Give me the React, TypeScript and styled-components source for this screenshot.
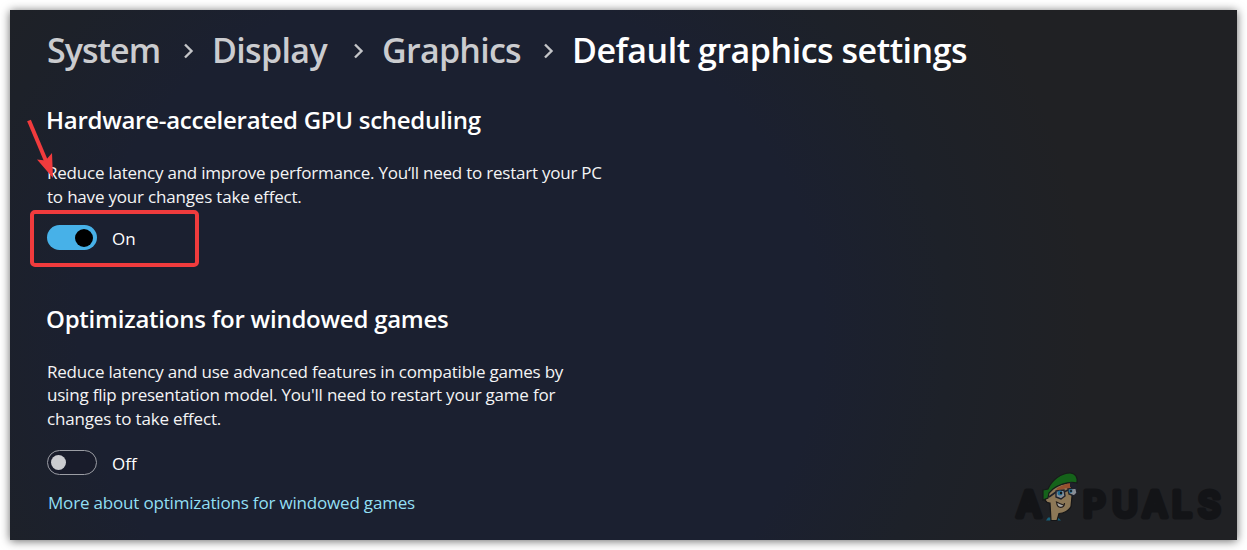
import styled, { createGlobalStyle } from 'styled-components';

const GlobalStyle = createGlobalStyle`
	* {
		box-sizing: border-box;
	}

	body {
		margin: 0;
		background: #ffffff;
		font-family: 'Open Sans', 'Noto Sans', sans-serif;
		overflow: hidden;
	}
`;

const Page = styled.div`
	height: 550px;
	padding: 10px;
`;

const Window = styled.main`
	position: relative;
	height: 530px;
	padding: 15px 36px 0;
	color: #ffffff;
	background: radial-gradient(
		ellipse 640px 600px at 440px 320px,
		#1b2030 0%,
		#1b2030 58%,
		#1d2129 78%,
		#202124 100%
	);
	box-shadow: 0 1px 9px rgba(0, 0, 0, 0.6);
`;

const Breadcrumbs = styled.nav`
	display: flex;
	align-items: center;
	height: 50px;
	padding-left: 1px;
	white-space: nowrap;
`;

const Crumb = styled.span<{ $width: number; $spacing: number; $current?: boolean }>`
	flex: 0 0 ${({ $width }) => $width}px;
	font-size: 34px;
	line-height: 50px;
	font-weight: 600;
	letter-spacing: ${({ $spacing }) => $spacing}px;
	color: ${({ $current }) => ($current ? '#ffffff' : '#cbcccf')};
`;

const Separator = styled.svg`
	flex: none;
	width: 11px;
	height: 16px;
	margin: 2px 17px 0 0;
	fill: none;
	stroke: #c4c5c8;
	stroke-width: 2.4;
`;

const Section = styled.section<{ $top: number }>`
	display: flex;
	flex-direction: column;
	align-items: flex-start;
	margin-top: ${({ $top }) => $top}px;
`;

const Title = styled.h2<{ $spacing: number }>`
	margin: 0 0 24px;
	font-size: 24px;
	line-height: 34px;
	font-weight: 600;
	letter-spacing: ${({ $spacing }) => $spacing}px;
	white-space: nowrap;
`;

const Description = styled.p<{ $lineHeight?: number }>`
	margin: 0 0 0 1px;
	font-size: 17px;
	line-height: ${({ $lineHeight = 24 }) => $lineHeight}px;
	color: #f4f4f5;
	white-space: nowrap;
`;

const Line = styled.span<{ $spacing: number }>`
	display: block;
	letter-spacing: ${({ $spacing }) => $spacing}px;
`;

const ToggleRow = styled.div<{ $top: number }>`
	position: relative;
	display: flex;
	align-items: center;
	gap: 15px;
	height: 25px;
	margin: ${({ $top }) => $top}px 0 0 1px;
	font-size: 17px;
	line-height: 24px;
`;

const Switch = styled.button<{ $on?: boolean }>`
	display: flex;
	align-items: center;
	justify-content: ${({ $on }) => ($on ? 'flex-end' : 'flex-start')};
	width: 50px;
	height: 25px;
	padding: ${({ $on }) => ($on ? '0 4px' : '0 3px')};
	border: ${({ $on }) => ($on ? '0' : '1px solid #9b9da4')};
	border-radius: 13px;
	background: ${({ $on }) => ($on ? '#47b1e8' : '#191c2b')};
`;

const Knob = styled.span<{ $on?: boolean }>`
	width: ${({ $on }) => ($on ? 18 : 15)}px;
	height: ${({ $on }) => ($on ? 18 : 15)}px;
	border-radius: 50%;
	background: ${({ $on }) => ($on ? '#000000' : '#cbccd0')};
`;

const State = styled.span`
	padding-top: 3px;
`;

const MoreLink = styled.a`
	margin: 16px 0 0 2px;
	font-size: 17px;
	line-height: 24px;
	letter-spacing: -0.18px;
	color: #92dff3;
	white-space: nowrap;
`;

/* red marks drawn over the page */
const Highlight = styled.div`
	position: absolute;
	left: -17px;
	top: -15px;
	width: 169px;
	height: 57px;
	border: 4px solid #f03b3d;
	border-radius: 5px;
`;

const Arrow = styled.svg`
	position: absolute;
	left: 14px;
	top: 108px;
	width: 34px;
	height: 64px;
`;

const Watermark = styled.svg`
	position: absolute;
	left: 1000px;
	top: 458px;
	width: 220px;
	height: 62px;
`;

const Chevron = () => (
	<Separator viewBox='0 0 11 16'>
		<path d='M1 1.500 7.500 8 1 14.500' />
	</Separator>
);

const Toggle = ({ on, top }: { on?: boolean; top: number }) => (
	<ToggleRow $top={top}>
		<Switch $on={on} role='switch' aria-checked={!!on}>
			<Knob $on={on} />
		</Switch>
		<State>{on ? 'On' : 'Off'}</State>
		{on && <Highlight />}
	</ToggleRow>
);

const Logo = () => (
	<Watermark viewBox='1010 468 220 62'>
		<text
			x='1016.5 1083 1112 1142.5 1172 1198'
			y='517.3'
			fontFamily='Inter, sans-serif'
			fontSize='35'
			fontWeight='500'
			fill='#131417'
			stroke='#131417'
			strokeWidth='5'
			strokeLinejoin='round'>
			APUALS
		</text>
		<path d='M1046 520.500l2-3h10l3 3z' fill='#176079' />
		<path
			d='M1045 500c1 2 3 3 5 3l1 17.500h6l2-7c5 0 10-3 12-7l1-10-1-14-15 3-9 9z'
			fill='#8d7857'
			stroke='#151517'
			strokeWidth='1.2'
		/>
		<path d='M1057 488l13-6 1 9-5-3-10 4z' fill='#96512f' />
		<path
			d='M1043 490l5-1c4-9 13-16 22-16 5 0 8 4 7 10-9-2-18 2-24 6l-4 4-1 5-5 2z'
			fill='#15631a'
			stroke='#171b1a'
			strokeWidth='1.2'
		/>
		<path d='M1070 482l7 2-1 5-6-2z' fill='#20212b' />
		<path
			d='M1056 491l8-1 1 6-4 3-5-2zM1068 489l8-1 1 5-3 3-5-2z'
			fill='#898e96'
			stroke='#20222b'
			strokeWidth='1.4'
		/>
		<path d='M1064 492l4-2M1056 492l-7 5' stroke='#20222b' strokeWidth='1.6' />
		<circle cx='1060' cy='493' r='2.500' fill='#236d91' />
		<circle cx='1070.500' cy='491' r='2' fill='#236d91' />
		<circle cx='1061' cy='493' r='1.200' fill='#121419' />
		<circle cx='1071' cy='491' r='1' fill='#121419' />
		<path d='M1056.500 502c2 1 4 2 7 3 1 0 1-1 1-2 0 5-7 7-8-1z' fill='#aaa9a6' stroke='#241e1b' strokeWidth='1.2' />
	</Watermark>
);

const App = () => {
	return (
		<>
			<GlobalStyle />
			<Page>
				<Window>
					<Breadcrumbs>
						<Crumb $width={137} $spacing={-0.95}>System</Crumb>
						<Chevron />
						<Crumb $width={142} $spacing={-0.65}>Display</Crumb>
						<Chevron />
						<Crumb $width={162} $spacing={-0.73}>Graphics</Crumb>
						<Chevron />
						<Crumb $width={420} $spacing={-0.48} $current>Default graphics settings</Crumb>
					</Breadcrumbs>

					<Section $top={28}>
						<Title $spacing={-0.28}>Hardware-accelerated GPU scheduling</Title>
						<Description>
							<Line $spacing={-0.225}>Reduce latency and improve performance. You‘ll need to restart your PC</Line>
							<Line $spacing={-0.19}>to have your changes take effect.</Line>
						</Description>
						<Toggle on top={16} />
					</Section>

					<Section $top={52}>
						<Title $spacing={-0.24}>Optimizations for windowed games</Title>
						<Description $lineHeight={23.4}>
							<Line $spacing={-0.21}>Reduce latency and use advanced features in compatible games by</Line>
							<Line $spacing={-0.21}>using flip presentation model. You'll need to restart your game for</Line>
							<Line $spacing={-0.17}>changes to take effect.</Line>
						</Description>
						<Toggle top={19.8} />
						<MoreLink>More about optimizations for windowed games</MoreLink>
					</Section>

					<Arrow viewBox='24 118 34 64'>
						<path d='M29 120.500 46 161' fill='none' stroke='#f03b3d' strokeWidth='4' />
						<path d='M53 178 37 159.500l8.500 1L52 153z' fill='#f03b3d' />
					</Arrow>
					<Logo />
				</Window>
			</Page>
		</>
	);
};

export default App;
